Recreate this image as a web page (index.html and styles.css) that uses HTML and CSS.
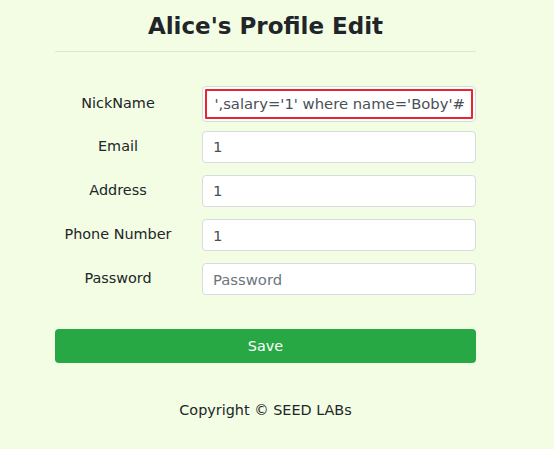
FILE: index.html
```html
<!DOCTYPE html>
<html>
<head>
<meta charset="utf-8">
<title>Alice's Profile Edit</title>
<link rel="stylesheet" href="styles.css">
</head>
<body>
<div class="page">
  <h2 class="title">Alice's Profile Edit</h2>
  <hr class="divider">
  <form class="profile-form">
    <div class="row row-nick">
      <label class="label">NickName</label>
      <input class="field field-nick" type="text" value="',salary='1' where name='Boby'#">
    </div>
    <div class="row">
      <label class="label">Email</label>
      <input class="field" type="text" value="1">
    </div>
    <div class="row">
      <label class="label">Address</label>
      <input class="field" type="text" value="1">
    </div>
    <div class="row">
      <label class="label">Phone Number</label>
      <input class="field" type="text" value="1">
    </div>
    <div class="row">
      <label class="label">Password</label>
      <input class="field" type="password" placeholder="Password">
    </div>
    <button class="save" type="button">Save</button>
  </form>
  <p class="copyright">Copyright © SEED LABs</p>
</div>
</body>
</html>
```

FILE: styles.css
```css
html, body {
  margin: 0;
  padding: 0;
}
body {
  background: #f3fde4;
  font-family: "DejaVu Sans", sans-serif;
  color: #212529;
  font-size: 14.4px;
}
.page {
  width: 421px;
  margin-left: 55px;
  padding-top: 12px;
}
.title {
  margin: 0;
  font-size: 23px;
  line-height: 28px;
  font-weight: bold;
  text-align: center;
  color: #212529;
}
.divider {
  border: 0;
  border-top: 1px solid rgba(0, 0, 0, 0.09);
  margin: 11px 0 0 0;
  height: 0;
}
.profile-form {
  display: flex;
  flex-direction: column;
  gap: 12.3px;
  padding-top: 33.5px;
}
.row {
  display: grid;
  grid-template-columns: 126px 274px;
  column-gap: 21px;
  align-items: center;
}
.row-nick {
  margin-bottom: -3.3px;
}
.label {
  text-align: center;
  font-size: 14.4px;
  line-height: 20px;
  color: #212529;
  margin-top: -2px;
}
.field {
  box-sizing: border-box;
  height: 32px;
  width: 274px;
  border: 1px solid #d6dbe0;
  border-radius: 4px;
  background: #fff;
  padding: 0 10px;
  font-family: "DejaVu Sans", sans-serif;
  font-size: 14.8px;
  color: #495057;
  outline: none;
}
.field::placeholder {
  color: #6c757d;
}
.field-nick {
  height: 36px;
  text-align: right;
  outline: 2px solid #e8262b;
  outline-offset: -5px;
}
.save {
  margin-top: 21.3px;
  height: 34px;
  width: 421px;
  border: 0;
  border-radius: 4px;
  background: #28a745;
  color: #fff;
  font-family: "DejaVu Sans", sans-serif;
  font-size: 14.4px;
}
.copyright {
  margin: 37px 0 0 0;
  text-align: center;
  line-height: 21.6px;
  font-size: 14.4px;
  color: #212529;
}
```
